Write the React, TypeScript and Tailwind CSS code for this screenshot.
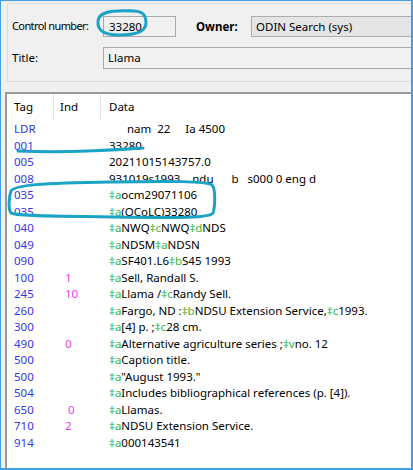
import React from 'react';

type Row = { tag: string; ind: string; data: string };

const ROWS: Row[] = [
  { tag: 'LDR', ind: '', data: '      nam  22     Ia 4500' },
  { tag: '001', ind: '', data: '33280' },
  { tag: '005', ind: '', data: '20211015143757.0' },
  { tag: '008', ind: '', data: '931019s1993    ndu      b   s000 0 eng d' },
  { tag: '035', ind: '', data: '‡aocm29071106' },
  { tag: '035', ind: '', data: '‡a(OCoLC)33280' },
  { tag: '040', ind: '', data: '‡aNWQ‡cNWQ‡dNDS' },
  { tag: '049', ind: '', data: '‡aNDSM‡aNDSN' },
  { tag: '090', ind: '', data: '‡aSF401.L6‡bS45 1993' },
  { tag: '100', ind: '1 ', data: '‡aSell, Randall S.' },
  { tag: '245', ind: '10', data: '‡aLlama /‡cRandy Sell.' },
  { tag: '260', ind: '', data: '‡aFargo, ND :‡bNDSU Extension Service,‡c1993.' },
  { tag: '300', ind: '', data: '‡a[4] p. ;‡c28 cm.' },
  { tag: '490', ind: '0 ', data: '‡aAlternative agriculture series ;‡vno. 12' },
  { tag: '500', ind: '', data: '‡aCaption title.' },
  { tag: '500', ind: '', data: '‡a"August 1993."' },
  { tag: '504', ind: '', data: '‡aIncludes bibliographical references (p. [4]).' },
  { tag: '650', ind: ' 0', data: '‡aLlamas.' },
  { tag: '710', ind: '2 ', data: '‡aNDSU Extension Service.' },
  { tag: '914', ind: '', data: '‡a000143541' },
];

// split "‡aFoo‡bBar" into green subfield codes and black text
const FieldData: React.FC<{ data: string }> = ({ data }) => {
  const parts = data.split('‡');
  return (
    <>
      {parts[0] && <span>{parts[0]}</span>}
      {parts.slice(1).map((p, i) => (
        <React.Fragment key={i}>
          <span className="text-[#3cb43c]">‡{p.charAt(0)}</span>
          <span>{p.slice(1)}</span>
        </React.Fragment>
      ))}
    </>
  );
};

const App: React.FC = () => {
  return (
    <div className="relative w-[413px] h-[470px] overflow-hidden bg-[#f0f0f0] border-l border-t border-r-2 border-b-2 border-[#3f9fe8] font-['Noto_Sans','Open_Sans',sans-serif] text-[11.5px] text-black">
      {/* header group box */}
      <div className="ml-[6px] mt-[2px] h-[79px] border-l border-t border-b border-[#dcdcdc] pl-[4px] pt-[12px] flex flex-col gap-[10px]">
        <div className="flex items-center h-[21px]">
          <span className="w-[91px] text-[11px] tracking-[-0.6px]">Control number:</span>
          <div className="w-[73px] h-[21px] border border-[#a8a8a8] bg-[#f0f0f0] pl-[5px] flex items-center">33280</div>
          <span className="ml-[20px] w-[55px] font-bold">Owner:</span>
          <div className="flex-1 h-[21px] border border-[#adadad] border-r-0 bg-[#e5e5e5] pl-[4px] flex items-center">ODIN Search (sys)</div>
        </div>
        <div className="flex items-center h-[22px]">
          <span className="w-[91px]">Title:</span>
          <div className="flex-1 h-[22px] border border-[#a8a8a8] border-r-0 bg-[#f2f2f2] pl-[4px] flex items-center">Llama</div>
        </div>
      </div>

      {/* MARC field list */}
      <div className="ml-[4px] mt-[10px] h-[400px] bg-white border-l-2 border-t-2 border-[#9a9a9a]">
        <div className="grid grid-cols-[47px_47px_1fr] h-[26px] items-center">
          <div className="pl-[7px] h-full flex items-center border-r border-[#e5e5e5]">Tag</div>
          <div className="pl-[6px] h-full flex items-center border-r border-[#e5e5e5]">Ind</div>
          <div className="pl-[8px]">Data</div>
        </div>
        <div className="flex flex-col">
          {ROWS.map((r, i) => (
            <div key={i} className="grid grid-cols-[47px_47px_1fr] h-[16.5px] items-center whitespace-pre">
              <div className="pl-[7px] text-[#3535e8]">{r.tag}</div>
              <div className="pl-[11px] text-[#f03cf0]">{r.ind}</div>
              <div className="pl-[8px]">
                <FieldData data={r.data} />
              </div>
            </div>
          ))}
        </div>
      </div>

      {/* hand-drawn highlight marks */}
      <svg className="absolute left-0 top-0 pointer-events-none" width="413" height="470" viewBox="0 0 413 470" fill="none">
        <g stroke="#1ba3c6" strokeWidth="3" strokeLinecap="round" strokeLinejoin="round">
          <path d="M 130 10 C 110 9, 98 11, 97 20 C 96 30, 104 34, 118 34 C 132 34, 145 32, 145 22 C 145 13, 142 9, 124 10" />
          <path d="M 17 150 C 60 152, 100 150, 142 147" />
          <path d="M 10 190 C 14 184, 40 182, 110 181 C 170 180, 205 180, 211 184 C 215 188, 214 206, 212 212 C 209 217, 180 217, 110 216 C 50 215, 15 215, 10 212 C 7 208, 8 196, 10 190" />
        </g>
      </svg>
    </div>
  );
};

export default App;
